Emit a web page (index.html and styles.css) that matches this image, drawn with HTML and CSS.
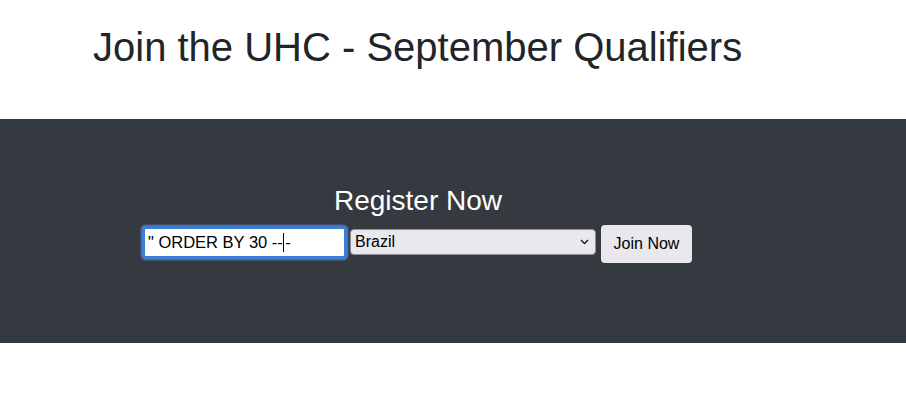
FILE: index.html
```html
<!DOCTYPE html>
<html lang="en">
<head>
<meta charset="utf-8">
<title>Join the UHC - September Qualifiers</title>
<link rel="stylesheet" href="styles.css">
</head>
<body>
  <header class="top">
    <h1 class="title">Join the UHC - September Qualifiers</h1>
  </header>
  <section class="band">
    <div class="band-inner">
      <h3 class="band-title">Register Now</h3>
      <form class="reg-form" onsubmit="return false">
        <div class="fake-input"><span>" ORDER BY 30 --</span><span class="caret"></span><span>-</span></div>
        <div class="select">
          <span>Brazil</span>
          <svg class="chev" width="9" height="6" viewBox="0 0 9 6"><path d="M1 1l3.5 3.5 3.5-3.5" fill="none" stroke="#222" stroke-width="1.5"/></svg>
        </div>
        <button class="btn" type="submit">Join Now</button>
      </form>
    </div>
  </section>
</body>
</html>
```

FILE: styles.css
```css
html, body {
  margin: 0;
  padding: 0;
  background: #fff;
}
body {
  font-family: "Liberation Sans", Arial, sans-serif;
  color: #212529;
}
.top {
  padding: 23px 0 48px 93px;
}
.title {
  margin: 0;
  font-size: 40px;
  line-height: 48px;
  font-weight: 400;
  color: #212529;
}
.band {
  background: #343a40;
  height: 224px;
  padding-top: 65px;
  box-sizing: border-box;
}
.band-inner {
  margin-left: 93px;
  width: 650px;
  text-align: center;
}
.band-title {
  margin: 0 0 7px;
  font-size: 28px;
  line-height: 33.6px;
  font-weight: 400;
  color: #fff;
}
.reg-form {
  display: flex;
  justify-content: center;
  align-items: flex-start;
  margin-left: -2px;
}
.fake-input {
  box-sizing: border-box;
  width: 205px;
  height: 33px;
  margin-top: 1px;
  margin-right: 3px;
  background: #fff;
  border: 3px solid #3c7dd6;
  border-radius: 4px;
  box-shadow: 0 0 0 1.5px #56688a;
  display: flex;
  align-items: center;
  padding-left: 3px;
  font-size: 16.5px;
  color: #000;
  white-space: pre;
  text-align: left;
}
.caret {
  display: inline-block;
  width: 1px;
  height: 19px;
  background: #000;
  margin: 0 1px 0 0.5px;
}
.select {
  box-sizing: border-box;
  width: 246px;
  height: 26px;
  margin-top: 4px;
  margin-right: 5px;
  background: #e9e9ed;
  border: 1px solid #8f8f9d;
  border-radius: 4px;
  display: flex;
  align-items: center;
  justify-content: space-between;
  padding: 1px 6px 0 4px;
  font-size: 16px;
  color: #000;
}
.btn {
  box-sizing: border-box;
  width: 91px;
  height: 38px;
  background: #e9e9ed;
  border: none;
  border-radius: 4px;
  font-family: "Liberation Sans", Arial, sans-serif;
  font-size: 16px;
  color: #000;
  padding: 0;
  margin: 0;
}
```
